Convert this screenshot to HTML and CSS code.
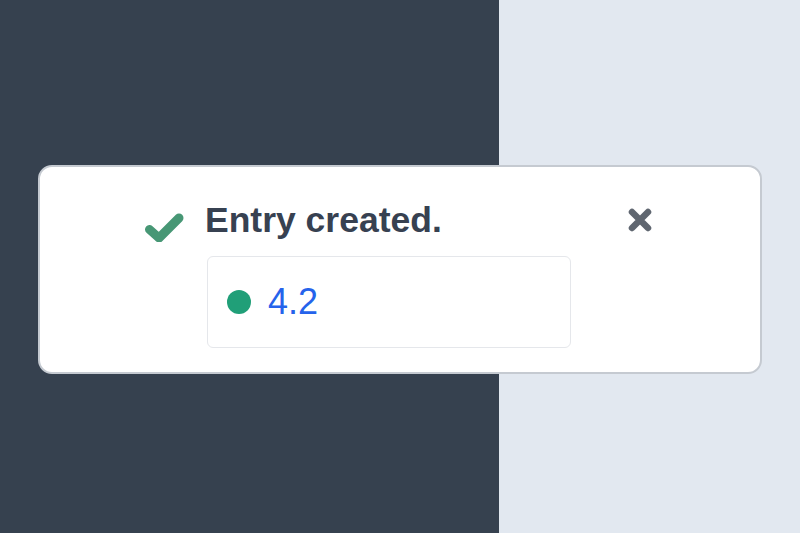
FILE: index.html
```html
<!DOCTYPE html>
<html lang="en">
<head>
<meta charset="utf-8">
<title>Entry created</title>
<link rel="stylesheet" href="styles.css">
</head>
<body>
<div class="stage">
  <div class="toast">
    <svg class="check" width="40" height="30" viewBox="0 0 40 30" aria-hidden="true">
      <polyline points="5.5,17.5 15,26 35,6" fill="none" stroke="#479775" stroke-width="9" stroke-linecap="round" stroke-linejoin="round"/>
    </svg>
    <div class="main">
      <h1 class="title">Entry created.</h1>
      <div class="entry">
        <span class="dot"></span>
        <span class="value">4.2</span>
      </div>
    </div>
    <button class="close" aria-label="Close">
      <svg width="24" height="24" viewBox="0 0 24 24" aria-hidden="true">
        <path d="M4 4 L20 20 M20 4 L4 20" stroke="#5f6670" stroke-width="6.5" stroke-linecap="round" fill="none"/>
      </svg>
    </button>
  </div>
</div>
</body>
</html>
```

FILE: styles.css
```css
html, body {
  margin: 0;
  padding: 0;
}
body {
  width: 800px;
  height: 533px;
  overflow: hidden;
  background: linear-gradient(to right, #36414f 0, #36414f 499px, #e2e8f0 499px, #e2e8f0 100%);
  font-family: "Liberation Sans", Arial, sans-serif;
}
.stage {
  padding: 165px 38px 0 38px;
}
.toast {
  box-sizing: border-box;
  width: 724px;
  height: 209px;
  background: #ffffff;
  border: 2px solid #c5cad1;
  border-radius: 14px;
  padding: 33px 108px 0 105px;
  display: flex;
  align-items: flex-start;
}
.check {
  display: block;
  flex: none;
  margin-top: 12px;
  margin-left: -1px;
}
.main {
  flex: 1;
  margin-left: 21px;
}
.title {
  margin: 0;
  font-size: 35.5px;
  line-height: 40px;
  font-weight: 700;
  color: #374151;
}
.entry {
  box-sizing: border-box;
  width: 364px;
  height: 92px;
  margin: 16px 0 0 2px;
  border: 1px solid #e5e7eb;
  border-radius: 6px;
  display: flex;
  align-items: center;
  padding: 0 0 0 19px;
}
.dot {
  width: 24px;
  height: 24px;
  border-radius: 50%;
  background: #209f78;
  flex: none;
}
.value {
  margin-left: 17px;
  font-size: 36px;
  line-height: 40px;
  color: #2563eb;
}
.close {
  flex: none;
  margin-top: 8px;
  padding: 0;
  border: 0;
  background: none;
  width: 24px;
  height: 24px;
  cursor: pointer;
}
.close svg {
  display: block;
}
```
